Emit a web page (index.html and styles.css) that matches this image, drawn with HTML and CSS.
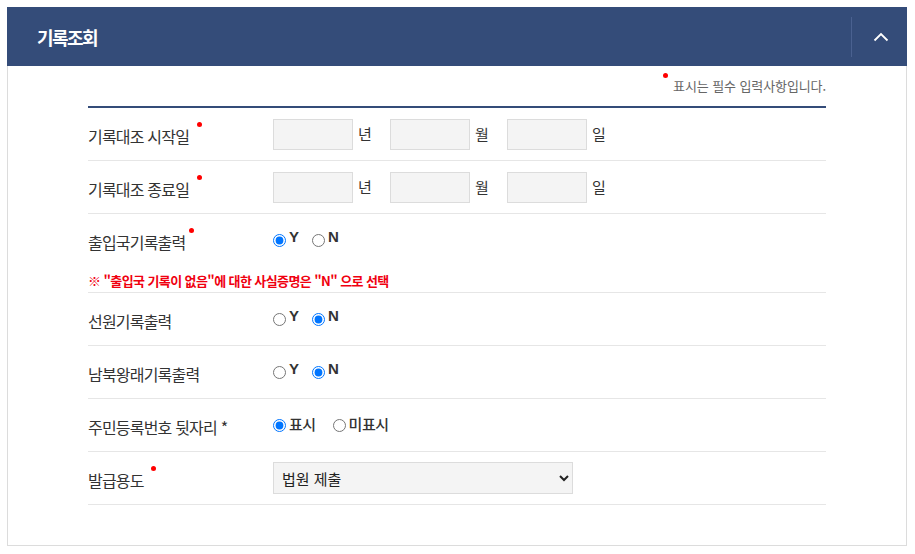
FILE: index.html
```html
<!DOCTYPE html>
<html lang="ko">
<head>
<meta charset="utf-8">
<title>기록조회</title>
<link rel="stylesheet" href="styles.css">
</head>
<body>
<section class="panel">
  <header class="panel-head">
    <h2 class="panel-title">기록조회</h2>
    <button class="toggle" type="button" aria-label="접기">
      <svg width="16" height="10" viewBox="0 0 16 10"><path d="M1.5 8.5 L8 2 L14.5 8.5" fill="none" stroke="#fff" stroke-width="1.8"/></svg>
    </button>
  </header>
  <div class="panel-body">
    <p class="req-note"><span class="dot dot-note"></span>표시는 필수 입력사항입니다.</p>
    <div class="form">
      <div class="row">
        <div class="label">기록대조 시작일 <span class="dot"></span></div>
        <div class="ctrl">
          <input class="box" type="text"><span class="unit">년</span>
          <input class="box" type="text"><span class="unit">월</span>
          <input class="box" type="text"><span class="unit">일</span>
        </div>
      </div>
      <div class="row">
        <div class="label">기록대조 종료일 <span class="dot"></span></div>
        <div class="ctrl">
          <input class="box" type="text"><span class="unit">년</span>
          <input class="box" type="text"><span class="unit">월</span>
          <input class="box" type="text"><span class="unit">일</span>
        </div>
      </div>
      <div class="row row-note">
        <div class="row-main">
          <div class="label">출입국기록출력<span class="dot dot-tight"></span></div>
          <div class="ctrl">
            <label class="opt"><input type="radio" name="r1" checked><span>Y</span></label>
            <label class="opt"><input type="radio" name="r1"><span>N</span></label>
          </div>
        </div>
        <p class="warn">※ "출입국 기록이 없음"에 대한 사실증명은 "N" 으로 선택</p>
      </div>
      <div class="row">
        <div class="label">선원기록출력</div>
        <div class="ctrl">
          <label class="opt"><input type="radio" name="r2"><span>Y</span></label>
          <label class="opt"><input type="radio" name="r2" checked><span>N</span></label>
        </div>
      </div>
      <div class="row">
        <div class="label">남북왕래기록출력</div>
        <div class="ctrl">
          <label class="opt"><input type="radio" name="r3"><span>Y</span></label>
          <label class="opt"><input type="radio" name="r3" checked><span>N</span></label>
        </div>
      </div>
      <div class="row">
        <div class="label">주민등록번호 뒷자리 *</div>
        <div class="ctrl">
          <label class="opt opt-wide"><input type="radio" name="r4" checked><span>표시</span></label>
          <label class="opt opt-wide"><input type="radio" name="r4"><span>미표시</span></label>
        </div>
      </div>
      <div class="row">
        <div class="label">발급용도 <span class="dot"></span></div>
        <div class="ctrl">
          <select class="sel">
            <option>법원 제출</option>
          </select>
        </div>
      </div>
    </div>
  </div>
</section>
</body>
</html>
```
FILE: styles.css
```css
* { box-sizing: border-box; }
html, body { margin: 0; padding: 0; background: #fff; }
body {
  font-family: "Noto Sans CJK KR", "Noto Sans", "Liberation Sans", sans-serif;
  color: #333;
}
.panel {
  margin: 7px 0 0 7px;
  width: 900px;
}
.panel-head {
  height: 59px;
  background: #344c79;
  display: flex;
  align-items: center;
  justify-content: space-between;
}
.panel-title {
  margin: 0 0 0 30px;
  color: #fff;
  font-size: 18px;
  font-weight: 700;
  letter-spacing: -1.6px;
  line-height: 24px;
}
.toggle {
  width: 56px;
  height: 40px;
  border: 0;
  border-left: 1px solid #4a6190;
  background: transparent;
  padding: 0 0 0 2px;
  display: flex;
  align-items: center;
  justify-content: center;
}
.toggle svg { display: block; }
.panel-body {
  border: 1px solid #dcdcdc;
  border-top: 0;
  height: 480px;
  padding: 0 80px 0 80px;
}
.req-note {
  margin: 0;
  padding-top: 9px;
  height: 40px;
  text-align: right;
  font-size: 13px;
  letter-spacing: -0.1px;
  color: #666;
  line-height: 20px;
}
.dot {
  display: inline-block;
  width: 5px;
  height: 5px;
  border-radius: 50%;
  background: #f00;
  vertical-align: 11px;
  margin-left: 4px;
  position: relative;
  top: -5px;
}
.dot-tight { margin-left: 4px; }
.dot-note { margin: 0 5px 0 0; top: -2px; }
.form {
  width: 738px;
  border-top: 2px solid #344c79;
}
.row {
  display: flex;
  align-items: center;
  height: 53px;
  border-bottom: 1px solid #e6e6e6;
}
.row-note {
  display: block;
  height: 79px;
}
.row-main {
  display: flex;
  align-items: center;
  height: 52px;
}
.label {
  width: 185px;
  flex: none;
  font-size: 16px;
  letter-spacing: -0.8px;
  line-height: 20px;
  padding-top: 3px;
}
.ctrl {
  display: flex;
  align-items: center;
}
.box {
  width: 80px;
  height: 31px;
  border: 1px solid #dcdcdc;
  background: #f4f4f4;
  margin: 0;
  padding: 0 6px;
}
.unit {
  font-size: 15px;
  width: 37px;
  padding-left: 5px;
  line-height: 20px;
}
.opt {
  display: flex;
  align-items: center;
  margin-right: 13px;
}
.opt input {
  margin: 0 3px 0 0;
  width: 13px;
  height: 13px;
}
.opt span {
  font-family: "Liberation Sans", "Noto Sans CJK KR", sans-serif;
  font-weight: 700;
  font-size: 15px;
  line-height: 16px;
  position: relative;
  top: -3px;
}
.opt-wide { margin-right: 17px; }
.opt-wide span {
  font-family: "Noto Sans CJK KR", sans-serif;
  font-weight: 500;
  font-size: 15px;
  letter-spacing: -0.5px;
  top: -1px;
}
.warn {
  margin: 0;
  color: #f00010;
  font-size: 13px;
  font-weight: 700;
  letter-spacing: -0.6px;
  line-height: 18px;
  padding-top: 6px;
}
.sel {
  width: 300px;
  height: 32px;
  border: 1px solid #dcdcdc;
  background: #f4f4f4;
  font-family: "Noto Sans CJK KR", sans-serif;
  font-size: 15px;
  color: #222;
  padding: 0 4px;
  border-radius: 0;
}
```
